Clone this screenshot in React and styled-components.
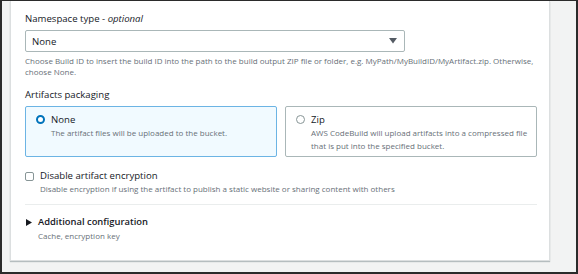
import React from "react";
import styled, { createGlobalStyle } from "styled-components";

const Global = createGlobalStyle`
  html, body { margin: 0; padding: 0; background: #f2f3f3; }
  body { font-family: "Open Sans", "Noto Sans", sans-serif; color: #16191f; }
`;

const Frame = styled.div`
  box-sizing: border-box;
  width: 578px;
  height: 274px;
  border-style: solid;
  border-color: #2b2b2b;
  border-width: 1px 2px 2px 2px;
  background: #f2f3f3;
  padding: 0 27px 11px 8px;
  display: flex;
`;

const Card = styled.section`
  box-sizing: border-box;
  flex: 1;
  background: #ffffff;
  border: 1px solid #dcdfe0;
  border-top: none;
  box-shadow: 0 1px 1px rgba(0, 28, 36, 0.25);
  padding: 11px 12px 0 14px;
  display: flex;
  flex-direction: column;
`;

const Field = styled.div`
  display: flex;
  flex-direction: column;
  margin-top: ${(p) => p.$mt || 0}px;
`;

const Label = styled.div`
  font-size: 9.6px;
  line-height: 14px;
  color: #16191f;
  margin-bottom: 4px;
  em { font-style: italic; }
`;

const Select = styled.div`
  box-sizing: border-box;
  width: 380px;
  height: 22px;
  border: 1px solid #aab7b8;
  border-radius: 2px;
  display: flex;
  align-items: center;
  justify-content: space-between;
  padding: 0 7px 0 6px;
  font-size: 9.6px;
  color: #16191f;
`;

const Help = styled.div`
  font-size: 8px;
  line-height: 11px;
  color: #687078;
  margin-top: ${(p) => p.$mt || 0}px;
`;

const Tiles = styled.div`
  display: grid;
  grid-template-columns: 252px 252px;
  gap: 8px;
`;

const Tile = styled.div`
  box-sizing: border-box;
  height: 51px;
  border: 1px solid ${(p) => (p.$selected ? "#6cb4e4" : "#aab7b8")};
  background: ${(p) => (p.$selected ? "#f1faff" : "#ffffff")};
  border-radius: 2px;
  padding: 6px 8px 0 10px;
  display: flex;
  gap: 6px;
`;

const Radio = styled.span`
  box-sizing: border-box;
  flex: none;
  width: 9px;
  height: 9px;
  margin-top: 2px;
  border-radius: 50%;
  border: ${(p) => (p.$checked ? "2.5px solid #0073bb" : "1px solid #879596")};
  background: #fff;
`;

const TextCol = styled.div`
  display: flex;
  flex-direction: column;
`;

const Title = styled.div`
  font-size: 9.6px;
  line-height: ${(p) => p.$lh || 14}px;
  color: #16191f;
`;

const TileDesc = styled.div`
  font-size: 8px;
  line-height: 13px;
  color: #687078;
`;

const CheckRow = styled.div`
  display: flex;
  gap: 6px;
  margin-top: 12px;
`;

const Checkbox = styled.span`
  box-sizing: border-box;
  flex: none;
  width: 9px;
  height: 9px;
  margin-top: 3px;
  border: 1px solid #879596;
  border-radius: 2px;
  background: #fff;
`;

const Divider = styled.hr`
  border: none;
  border-top: 1px solid #eaeded;
  margin: 10px 0 0 0;
`;

const Expander = styled.div`
  display: flex;
  gap: 6px;
  margin-top: 10px;
`;

const Caret = styled.svg`
  flex: none;
  margin-top: 4px;
  margin-left: 1px;
`;

const ExpTitle = styled.div`
  font-size: 9.4px;
  line-height: 14px;
  font-weight: 600;
  color: #16191f;
`;

export default function App() {
  return (
    <>
      <Global />
      <Frame>
        <Card>
          <Field>
            <Label>
              Namespace type - <em>optional</em>
            </Label>
            <Select>
              <span>None</span>
              <svg width="8" height="6" viewBox="0 0 8 6">
                <path d="M0 0 H8 L4 5.5 Z" fill="#545b64" />
              </svg>
            </Select>
            <Help $mt={3}>
              Choose Build ID to insert the build ID into the path to the build output ZIP file or folder, e.g. MyPath/MyBuildID/MyArtifact.zip. Otherwise,
              <br />
              choose None.
            </Help>
          </Field>
          <Field $mt={11}>
            <Label>Artifacts packaging</Label>
            <Tiles>
              <Tile $selected>
                <Radio $checked />
                <TextCol>
                  <Title $lh={13}>None</Title>
                  <TileDesc>The artifact files will be uploaded to the bucket.</TileDesc>
                </TextCol>
              </Tile>
              <Tile>
                <Radio />
                <TextCol>
                  <Title $lh={13}>Zip</Title>
                  <TileDesc>
                    AWS CodeBuild will upload artifacts into a compressed file
                    <br />
                    that is put into the specified bucket.
                  </TileDesc>
                </TextCol>
              </Tile>
            </Tiles>
          </Field>
          <CheckRow>
            <Checkbox />
            <TextCol>
              <Title>Disable artifact encryption</Title>
              <Help>Disable encryption if using the artifact to publish a static website or sharing content with others</Help>
            </TextCol>
          </CheckRow>
          <Divider />
          <Expander>
            <Caret width="6" height="7" viewBox="0 0 6 7">
              <path d="M0 0 L6 3.5 L0 7 Z" fill="#16191f" />
            </Caret>
            <TextCol>
              <ExpTitle>Additional configuration</ExpTitle>
              <Help $mt={1}>Cache, encryption key</Help>
            </TextCol>
          </Expander>
        </Card>
      </Frame>
    </>
  );
}
